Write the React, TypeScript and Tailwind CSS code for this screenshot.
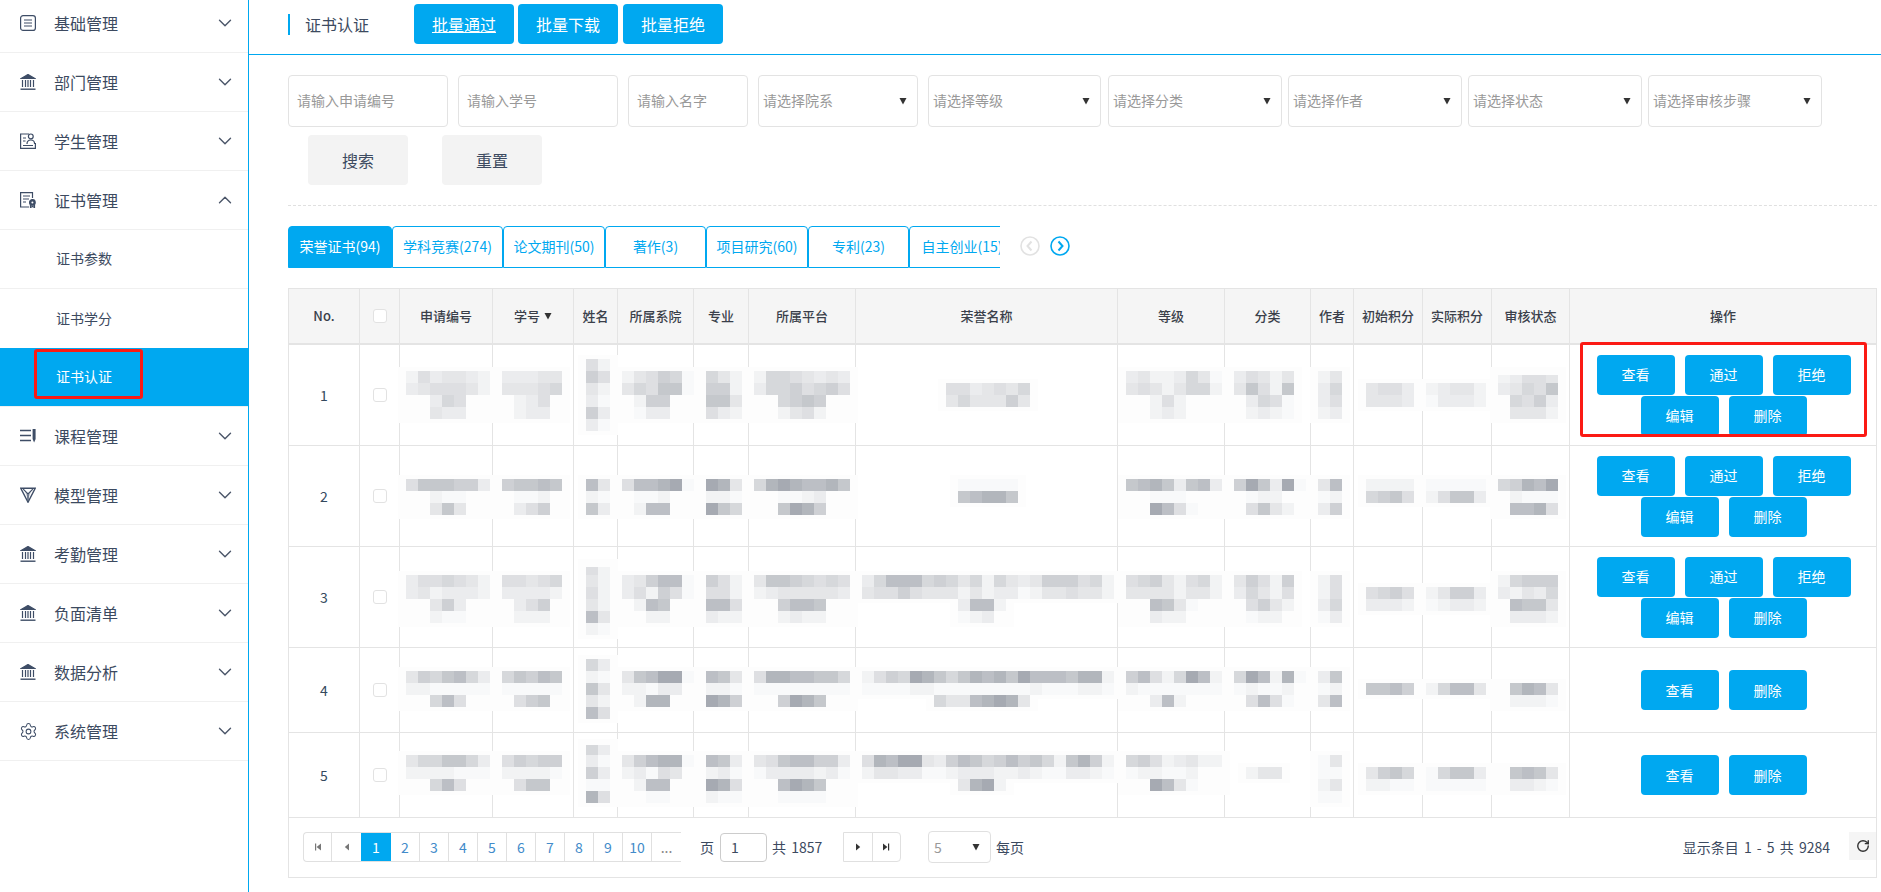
import React from "react";
import { ChevronDown, ChevronUp, Settings, RotateCw } from "lucide-react";

const iconProps = { width: 16, height: 16, viewBox: "0 0 16 16", fill: "none", stroke: "#3e4d66", strokeWidth: 1.2 };

const IconList = () => (
  <svg {...iconProps}>
    <rect x="0.6" y="0.6" width="14.8" height="14.8" rx="2.5" />
    <path d="M4 5h8M4 8h8M4 11h8" />
  </svg>
);
const IconBank = () => (
  <svg {...iconProps}>
    <path d="M8 0.5 L15 4.5 H1 Z" fill="#3e4d66" />
    <path d="M2.5 6v7M5.5 6v7M8 6v7M10.5 6v7M13.5 6v7" />
    <path d="M0.5 15.2h15" strokeWidth="1.4" />
  </svg>
);
const IconStudent = () => (
  <svg {...iconProps}>
    <path d="M9 1H0.6V15.4H15.4V10" />
    <circle cx="10.8" cy="3.4" r="2.4" />
    <path d="M7 11c0-3 1.8-4 3.8-4s3.8 1 3.8 4" />
    <path d="M3 5h3M3 8h2.5M3 12.5h10" />
  </svg>
);
const IconCert = () => (
  <svg {...iconProps}>
    <path d="M9 15H0.6V0.6H12.5V6" />
    <path d="M3 4h7M3 7h6M3 10h3" />
    <circle cx="12.4" cy="10.4" r="2.8" fill="#3e4d66" stroke="#3e4d66" />
    <circle cx="12.4" cy="10.4" r="1" fill="#fff" stroke="none" />
    <path d="M10.5 13v2.5l2-1 2 1V13" />
  </svg>
);
const IconCourse = () => (
  <svg {...iconProps}>
    <path d="M0 2.5h11M0 7.5h11M0 12.5h11" strokeWidth="1.5" />
    <path d="M12.6 1h3v10l-1.5 3.6-1.5-3.6z" fill="#3e4d66" stroke="none" />
  </svg>
);
const IconModel = () => (
  <svg {...iconProps}>
    <path d="M0.8 1.2H15.2L8 15.2Z" strokeWidth="1.4" />
    <path d="M3.2 2.2L8 7l4.8-4.8M8 7v6.5" />
    <path d="M5 4.2L8 7 11 4.2 8 13Z" fill="#3e4d66" stroke="none" opacity="0.35" />
  </svg>
);
const IconGear = () => <Settings size={19} strokeWidth={1.3} color="#3e4d66" className="shrink-0" />;

const menuTop = [
  { label: "基础管理", icon: <IconList /> },
  { label: "部门管理", icon: <IconBank /> },
  { label: "学生管理", icon: <IconStudent /> },
];
const menuBottom = [
  { label: "课程管理", icon: <IconCourse /> },
  { label: "模型管理", icon: <IconModel /> },
  { label: "考勤管理", icon: <IconBank /> },
  { label: "负面清单", icon: <IconBank /> },
  { label: "数据分析", icon: <IconBank /> },
  { label: "系统管理", icon: <IconGear /> },
];

function MenuRow({ label, icon, open, first }: { label: string; icon: React.ReactNode; open?: boolean; first?: boolean }) {
  return (
    <div className={`flex items-center border-b border-[#f0f0f0] pl-[20px] pr-[12px] text-[16px] text-[#3c4a60] ${first ? "h-[53px] pb-[6px]" : "h-[59px]"}`}>
      <span className="flex w-[16px] justify-center">{icon}</span>
      <span className="ml-[18px] pb-[1px]">{label}</span>
      <span className="ml-auto">
        {open ? <ChevronUp size={22} strokeWidth={1.5} color="#4a5568" /> : <ChevronDown size={22} strokeWidth={1.5} color="#4a5568" />}
      </span>
    </div>
  );
}

function Sidebar() {
  return (
    <aside className="relative h-[892px] w-[249px] shrink-0 border-r border-[#00a8f0]">
      {menuTop.map((m, i) => (
        <MenuRow key={m.label} label={m.label} icon={m.icon} first={i === 0} />
      ))}
      <MenuRow label="证书管理" icon={<IconCert />} open />
      <div className="flex h-[59px] items-center border-b border-[#f0f0f0] pb-[1px] pl-[56px] text-[14px] text-[#3c4a60]">证书参数</div>
      <div className="flex h-[59px] items-center pb-[1px] pl-[56px] text-[14px] text-[#3c4a60]">证书学分</div>
      <div className="flex h-[59px] items-center border-b border-[#f0f0f0] bg-[#00a8f0] bg-clip-padding pb-[1px] pl-[56px] text-[14px] text-white">证书认证</div>
      {menuBottom.map((m) => (
        <MenuRow key={m.label} label={m.label} icon={m.icon} />
      ))}
      <div className="absolute left-[34px] top-[349px] h-[50px] w-[109px] rounded-[3px] border-[3px] border-[#fb1a14]" />
    </aside>
  );
}

function Caret({ className }: { className?: string }) {
  return (
    <svg width="8" height="8" viewBox="0 0 8 8" className={className}>
      <path d="M0.5 1H7.5L4 7.5Z" fill="#333" />
    </svg>
  );
}

function TextInput({ w, ph, cls }: { w: string; ph: string; cls: string }) {
  return (
    <input
      placeholder={ph}
      className={`h-[52px] rounded-[4px] border border-[#e3e3e3] pb-[2px] pl-[8px] text-[14px] outline-none placeholder:text-[#999] ${w} ${cls}`}
    />
  );
}

function FakeSelect({ label, w, cls }: { label: string; w: string; cls: string }) {
  return (
    <div className={`flex h-[52px] items-center justify-between rounded-[4px] border border-[#e3e3e3] pl-[4px] pr-[10px] text-[14px] text-[#999] ${w} ${cls}`}>
      <span className="pb-[2px]">{label}</span>
      <Caret />
    </div>
  );
}

function Filters() {
  return (
    <div className="pt-[20px]">
      <div className="flex">
        <TextInput w="w-[160px]" ph="请输入申请编号" cls="" />
        <TextInput w="w-[160px]" ph="请输入学号" cls="ml-[10px]" />
        <TextInput w="w-[120px]" ph="请输入名字" cls="ml-[10px]" />
        <FakeSelect w="w-[160px]" label="请选择院系" cls="ml-[10px]" />
        <FakeSelect w="w-[173px]" label="请选择等级" cls="ml-[10px]" />
        <FakeSelect w="w-[174px]" label="请选择分类" cls="ml-[7px]" />
        <FakeSelect w="w-[174px]" label="请选择作者" cls="ml-[6px]" />
        <FakeSelect w="w-[174px]" label="请选择状态" cls="ml-[6px]" />
        <FakeSelect w="w-[174px]" label="请选择审核步骤" cls="ml-[6px]" />
      </div>
      <div className="mt-[8px] flex">
        <button className="ml-[20px] h-[50px] w-[100px] rounded-[4px] bg-[#f3f3f3] text-[16px] text-[#3c4a60]">搜索</button>
        <button className="ml-[34px] h-[50px] w-[100px] rounded-[4px] bg-[#f3f3f3] text-[16px] text-[#3c4a60]">重置</button>
      </div>
      <div className="mr-[4px] mt-[20px] border-t border-dashed border-[#e0e0e0]" />
    </div>
  );
}

const tabs = [
  { label: "荣誉证书(94)", w: "w-[104px]", active: true },
  { label: "学科竞赛(274)", w: "w-[111px]" },
  { label: "论文期刊(50)", w: "w-[102px]" },
  { label: "著作(3)", w: "w-[101px]" },
  { label: "项目研究(60)", w: "w-[102px]" },
  { label: "专利(23)", w: "w-[101px]" },
  { label: "自主创业(15)", w: "w-[106px]" },
];

function Tabs() {
  return (
    <div className="mt-[20px] flex h-[42px] items-center">
      <div className="flex h-[42px] w-[712px] overflow-hidden">
        {tabs.map((t) => (
          <div
            key={t.label}
            className={`flex h-[42px] shrink-0 items-center justify-center rounded-t-[4px] border border-[#00a8f0] pb-[1px] text-[14px] ${t.w} ${t.active ? "bg-[#00a8f0] text-white" : "bg-white text-[#00a8f0]"}`}
          >
            {t.label}
          </div>
        ))}
      </div>
      <svg width="20" height="20" viewBox="0 0 20 20" fill="none" className="ml-[20px] mt-[-3px]">
        <circle cx="10" cy="10" r="9" stroke="#e2e2e2" strokeWidth="1.6" />
        <path d="M11.5 5.5L7.5 10l4 4.5" stroke="#e2e2e2" strokeWidth="2" />
      </svg>
      <svg width="20" height="20" viewBox="0 0 20 20" fill="none" className="ml-[10px] mt-[-3px]">
        <circle cx="10" cy="10" r="9" stroke="#00a8f0" strokeWidth="1.6" />
        <path d="M8.5 5.5L12.5 10l-4 4.5" stroke="#00a8f0" strokeWidth="2" />
      </svg>
    </div>
  );
}

const colWidths = [
  "w-[72px]", "w-[40px]", "w-[93px]", "w-[81px]", "w-[44px]", "w-[76px]", "w-[55px]", "w-[107px]",
  "w-[262px]", "w-[107px]", "w-[86px]", "w-[43px]", "w-[69px]", "w-[69px]", "w-[78px]", "w-[307px]",
];
const headers = ["No.", "", "申请编号", "学号", "姓名", "所属系院", "专业", "所属平台", "荣誉名称", "等级", "分类", "作者", "初始积分", "实际积分", "审核状态", "操作"];

function Check() {
  return <input type="checkbox" className="block h-[14px] w-[14px] appearance-none rounded-[3px] border border-[#e2e2e2] bg-white" />;
}

function ActionBtn({ t }: { t: string }) {
  return <button className="h-[40px] w-[78px] rounded-[4px] bg-[#00a8f0] text-[14px] text-white">{t}</button>;
}

const rows = [
  { h: "h-[101px]", acts: ["查看", "通过", "拒绝", "编辑", "删除"] },
  { h: "h-[101px]", acts: ["查看", "通过", "拒绝", "编辑", "删除"] },
  { h: "h-[101px]", acts: ["查看", "通过", "拒绝", "编辑", "删除"] },
  { h: "h-[85px]", acts: ["查看", "删除"] },
  { h: "h-[85px]", acts: ["查看", "删除"] },
];

type Block = { x: number; y: number; r: string[]; t?: number };
const shades: Record<string, string> = {
  "0": "#f8f9fa", "1": "#f2f3f4", "2": "#ebecee", "3": "#e5e6e8", "4": "#dedfe2", "5": "#d6d8db",
  "6": "#ced0d4", "7": "#c5c8cc", "8": "#bcbfc5", "9": "#b2b6bc", a: "#a6aab2",
};
const blocks: Block[] = [
  // row 1
  { x: 406, y: 371, r: ["1423321", "2344431", "  254", "  322"] },
  { x: 502, y: 371, r: ["22233", "33345", " 124", " 122"] },
  { x: 586, y: 359, r: ["41", "64", "31", "20", "62", "20"] },
  { x: 622, y: 371, r: ["134650", "354770", " 166", " 022"] },
  { x: 706, y: 371, r: ["531", "661", "773", "421"] },
  { x: 754, y: 371, r: ["15543232", "25564564", "  5676", "  1341"] },
  { x: 946, y: 383, r: ["4423435", "3533363"] },
  { x: 1126, y: 371, r: ["23112530", "34313551", "  141", "  121"] },
  { x: 1234, y: 371, r: ["24313", "37417", " 2540", " 1210"] },
  { x: 1318, y: 371, r: ["13", "25", "24", "12"] },
  { x: 1366, y: 383, r: ["3442", "3332"] },
  { x: 1426, y: 383, r: ["12331", "02221"] },
  { x: 1498, y: 371, t: 4, r: ["12443", "23547", " 5462", " 3331"] },
  // row 2
  { x: 406, y: 479, r: ["4777662", "  100", "  373"] },
  { x: 502, y: 479, r: ["67787", " 001", " 246"] },
  { x: 586, y: 479, r: ["83", "10", "72"] },
  { x: 622, y: 479, r: ["4889a0", " 001", " 188"] },
  { x: 706, y: 479, r: ["a93", "110", "a75"] },
  { x: 754, y: 479, r: ["59a98897", "  0012", "  7a96"] },
  { x: 958, y: 479, r: ["00000", "78997"] },
  { x: 1126, y: 479, r: ["78972782", "  000", "  a840"] },
  { x: 1234, y: 479, r: ["6a72a0", " 011", " 4731"] },
  { x: 1318, y: 479, r: ["38", "01", "26"] },
  { x: 1366, y: 479, r: ["1111", "5674"] },
  { x: 1426, y: 479, r: ["00000", "14772"] },
  { x: 1498, y: 479, r: ["5698a", " 1000", " 8894"] },
  // row 3
  { x: 406, y: 575, r: ["2445431", "2312221", "  362", "  100"] },
  { x: 502, y: 575, r: ["44345", "22221", " 246", " 111"] },
  { x: 586, y: 563, t: 4, r: ["41", "31", "41", "31", "83", "10"] },
  { x: 622, y: 575, r: ["236880", "241640", " 187", "  11"] },
  { x: 706, y: 575, r: ["641", "441", "884", "211"] },
  { x: 754, y: 575, r: ["37765454", "12333332", "  6887", "  1211"] },
  { x: 862, y: 575, r: ["258885653515323666451", "344643331312201334331"] },
  { x: 958, y: 599, r: ["2881", "012"] },
  { x: 1126, y: 575, r: ["45631451", "33331331", "  8730", "  211"] },
  { x: 1234, y: 575, r: ["36416", "25314", " 4631", " 011"] },
  { x: 1318, y: 575, r: ["14", "14", "25", "02"] },
  { x: 1366, y: 587, r: ["4564", "2221"] },
  { x: 1426, y: 587, r: ["13662", "01221"] },
  { x: 1498, y: 575, r: ["15666", "21325", " 8773", " 2221"] },
  // row 4
  { x: 406, y: 671, r: ["3657852", "1100000", "  584"] },
  { x: 502, y: 671, r: ["57687", "00000", " 467"] },
  { x: 586, y: 659, r: ["52", "10", "73", "31", "84"] },
  { x: 622, y: 671, r: ["378aa0", "11022", " 199"] },
  { x: 706, y: 671, r: ["873", "110", "a96"] },
  { x: 754, y: 671, r: ["49988775", "00000000", "  6a97"] },
  { x: 862, y: 671, r: ["1465a97579897a8887991", "000011000000001000110"] },
  { x: 934, y: 695, r: ["53389a93"] },
  { x: 1126, y: 671, r: ["68415a81", "10000000", "  281"] },
  { x: 1234, y: 671, r: ["5a8190", "01001", " 4840"] },
  { x: 1318, y: 671, r: ["27", "01", "38"] },
  { x: 1366, y: 683, r: ["7786"] },
  { x: 1426, y: 683, r: ["15883"] },
  { x: 1498, y: 683, r: [" 7983", " 1110"] },
  // row 5
  { x: 406, y: 755, r: ["3557752", "1111000", "  584"] },
  { x: 502, y: 755, r: ["46566", "11110", " 477"] },
  { x: 586, y: 743, t: 2, r: ["52", "20", "62", "00", "94"] },
  { x: 622, y: 755, r: ["368990", "12043", " 188", "  00"] },
  { x: 706, y: 755, r: ["872", "120", "a94", "100"] },
  { x: 754, y: 755, r: ["34788662", "02222120", "  8a97", "  0000"] },
  { x: 862, y: 755, r: ["498aa3268756867517961", "133220012221121002210"] },
  { x: 958, y: 779, r: ["39a1"] },
  { x: 1126, y: 755, r: ["56412311", "011001", "  a830"] },
  { x: 1246, y: 767, r: ["133"] },
  { x: 1318, y: 755, r: ["03", "00", "13", "00"] },
  { x: 1366, y: 767, r: ["3675", "1100"] },
  { x: 1426, y: 767, r: ["05772", "00000"] },
  { x: 1498, y: 767, r: [" 7873", " 2210"] },
];

function Mosaic() {
  return (
    <svg
      width="1589"
      height="590"
      viewBox="288 288 1589 590"
      shapeRendering="crispEdges"
      className="pointer-events-none absolute left-0 top-0"
    >
      {blocks.map((b, i) => {
        const w = Math.max(...b.r.map((s) => s.length)) * 12;
        const h = b.r.length * 12;
        return <rect key={`h${i}`} x={b.x - 8} y={b.y - 4} width={w + 16} height={h + 8} fill="#fdfdfd" />;
      })}
      {blocks.flatMap((b, i) =>
        b.r.flatMap((line, ly) =>
          line.split("").map((c, cx) =>
            c === " " ? null : (
              <rect
                key={`${i}-${ly}-${cx}`}
                x={b.x + cx * 12}
                y={b.y + ly * 12 + (ly === 0 && b.t ? b.t : 0)}
                width={12}
                height={ly === 0 && b.t ? 12 - b.t : 12}
                fill={shades[c]}
              />
            )
          )
        )
      )}
    </svg>
  );
}

function DataTable() {
  return (
    <table className="w-[1589px] table-fixed border-separate border-spacing-0">
      <colgroup>
        {colWidths.map((w, i) => (
          <col key={i} className={w} />
        ))}
      </colgroup>
      <thead>
        <tr>
          {headers.map((h, i) => (
            <th
              key={i}
              className={`h-[57px] border-b-2 border-r border-t border-[#e4e4e4] bg-[#f5f5f5] text-center text-[13px] font-medium text-[#3a3f4a] ${i === 0 ? "border-l font-bold" : ""}`}
            >
              {i === 1 ? (
                <span className="flex justify-center"><Check /></span>
              ) : i === 3 ? (
                <span className="inline-flex items-center gap-[4px]">{h}<Caret /></span>
              ) : (
                h
              )}
            </th>
          ))}
        </tr>
      </thead>
      <tbody>
        {rows.map((r, i) => (
          <tr key={i} className={r.h}>
            <td className="border-b border-l border-r border-[#e4e4e4] text-center text-[14px] text-[#34495e]">{i + 1}</td>
            <td className="border-b border-r border-[#e4e4e4]"><span className="flex justify-center"><Check /></span></td>
            {Array.from({ length: 13 }).map((_, c) => (
              <td key={c} className="border-b border-r border-[#e4e4e4]" />
            ))}
            <td className="border-b border-r border-[#e4e4e4]">
              <div className="flex flex-wrap justify-center gap-x-[10px] gap-y-[1px] pl-[1px]">
                {r.acts.map((a) => (
                  <ActionBtn key={a} t={a} />
                ))}
              </div>
            </td>
          </tr>
        ))}
      </tbody>
    </table>
  );
}

function PagerIcon({ d, color }: { d: string; color: string }) {
  return (
    <svg width="10" height="10" viewBox="0 0 10 10">
      <path d={d} fill={color} />
    </svg>
  );
}

function Pager() {
  const nums = ["2", "3", "4", "5", "6", "7", "8", "9", "10"];
  return (
    <div className="flex h-[60px] border-b border-l border-r border-[#e4e4e4] pl-[14px] pt-[14px] text-[14px] text-[#3c4a60]">
      <div className="flex h-[30px] items-center">
        <div className="flex h-[30px] w-[378px] overflow-hidden rounded-l-[4px] border-y border-l border-[#e0e0e0]">
          <div className="flex w-[28px] shrink-0 items-center justify-center border-r border-[#e0e0e0]">
            <PagerIcon d="M2 1.5h1.2v7H2zM8 1.5v7L3.6 5z" color="#777" />
          </div>
          <div className="flex w-[29px] shrink-0 items-center justify-center">
            <PagerIcon d="M7 1.5v7L2.8 5z" color="#777" />
          </div>
          <div className="mx-0 my-[-1px] flex w-[30px] shrink-0 items-center justify-center bg-[#00a8f0] text-white">1</div>
          {nums.map((n) => (
            <div key={n} className="flex w-[29px] shrink-0 items-center justify-center border-r border-[#e0e0e0] text-[#428bca]">{n}</div>
          ))}
          <div className="flex w-[29px] shrink-0 items-center justify-center text-[#888]">...</div>
        </div>
        <span className="ml-[19px]">页</span>
        <input defaultValue="1" className="ml-[6px] h-[29px] w-[47px] rounded-[4px] border border-[#ccc] pl-[10px] text-[14px] outline-none" />
        <span className="ml-[5px] w-[52px] whitespace-nowrap [word-spacing:2px]">共 1857</span>
        <div className="ml-[19px] flex h-[30px] w-[58px] rounded-r-[4px] border border-[#e0e0e0]">
          <div className="flex flex-1 items-center justify-center border-r border-[#e0e0e0]">
            <PagerIcon d="M3 1.5v7L7.2 5z" color="#333" />
          </div>
          <div className="flex flex-1 items-center justify-center">
            <PagerIcon d="M2 1.5v7L6.4 5zM7 1.5h1.2v7H7z" color="#333" />
          </div>
        </div>
        <div className="ml-[27px] flex h-[32px] w-[63px] items-center justify-between rounded-[4px] border border-[#e0e0e0] pl-[5px] pr-[10px] text-[#999]">
          <span>5</span>
          <Caret />
        </div>
        <span className="ml-[5px]">每页</span>
      </div>
      <div className="ml-auto flex h-[30px] items-center">
        <span className="mr-[19px] whitespace-nowrap [word-spacing:2px]">显示条目 1 - 5 共 9284</span>
        <div className="flex h-[28px] w-[27px] items-center justify-center self-start bg-[#f5f5f5]">
          <RotateCw size={14} strokeWidth={2.4} color="#333" />
        </div>
      </div>
    </div>
  );
}

export default function App() {
  return (
    <div className="relative flex h-[892px] w-[1881px] overflow-hidden bg-white font-['Noto_Sans_CJK_SC','Liberation_Sans',sans-serif]">
      <Sidebar />
      <main className="min-w-0 flex-1">
        <header className="h-[55px] border-b border-[#00a8f0] pl-[39px] pt-[4px]">
          <div className="flex h-[40px] items-center">
            <div className="flex h-[21px] w-[126px] items-center border-l-2 border-[#00a8f0] pl-[15px] text-[16px] text-[#3c4a60]">证书认证</div>
            <button className="h-[40px] w-[100px] rounded-[4px] bg-[#00a8f0] text-[16px] text-white underline">批量通过</button>
            <button className="ml-[4px] h-[40px] w-[100px] rounded-[4px] bg-[#00a8f0] text-[16px] text-white">批量下载</button>
            <button className="ml-[5px] h-[40px] w-[100px] rounded-[4px] bg-[#00a8f0] text-[16px] text-white">批量拒绝</button>
          </div>
        </header>
        <div className="pl-[39px]">
          <Filters />
          <Tabs />
          <div className="relative mt-[20px] w-[1589px]">
            <DataTable />
            <Pager />
            <Mosaic />
          </div>
        </div>
      </main>
      <div className="absolute left-[1580px] top-[342px] h-[95px] w-[287px] rounded-[3px] border-[3px] border-[#fb1a14]" />
    </div>
  );
}
